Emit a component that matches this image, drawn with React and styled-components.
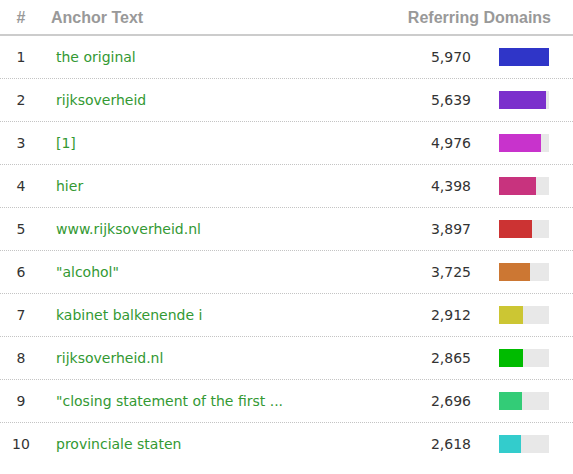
import React from "react";
import styled, { createGlobalStyle } from "styled-components";

const GlobalStyle = createGlobalStyle`
  body {
    margin: 0;
    background: #ffffff;
  }
`;

const rows = [
  { text: "the original", count: 5970, color: "#2f35c8" },
  { text: "rijksoverheid", count: 5639, color: "#7b2fcc" },
  { text: "[1]", count: 4976, color: "#c833cc" },
  { text: "hier", count: 4398, color: "#c8337e" },
  { text: "www.rijksoverheid.nl", count: 3897, color: "#cc3333" },
  { text: "\"alcohol\"", count: 3725, color: "#cc7733" },
  { text: "kabinet balkenende i", count: 2912, color: "#ccc633" },
  { text: "rijksoverheid.nl", count: 2865, color: "#00bb00" },
  { text: "\"closing statement of the first ...", count: 2696, color: "#33cc77" },
  { text: "provinciale staten", count: 2618, color: "#33cccc" },
];

const max = 5970;

export default function App() {
  return (
    <>
      <GlobalStyle />
      <Table>
        <HeadRow>
          <HeadCell $center>#</HeadCell>
          <HeadCell>Anchor Text</HeadCell>
          <HeadCell $right>Referring Domains</HeadCell>
        </HeadRow>
        {rows.map((r, i) => (
          <Row key={i} $last={i === rows.length - 1}>
            <Index>{i + 1}</Index>
            <Anchor>{r.text}</Anchor>
            <Count>{r.count.toLocaleString("en-US")}</Count>
            <BarCell>
              <Bar>
                <Fill $color={r.color} style={{ width: `${(r.count / max) * 100}%` }} />
              </Bar>
            </BarCell>
          </Row>
        ))}
      </Table>
    </>
  );
}

const Table = styled.div`
  width: 573px;
  font-family: "DejaVu Sans", Verdana, sans-serif;
`;

const HeadRow = styled.div`
  display: grid;
  grid-template-columns: 42px 1fr auto;
  align-items: center;
  height: 36px;
  padding-top: 1px;
  box-sizing: border-box;
  border-bottom: 2px solid #cccccc;
`;

const HeadCell = styled.div`
  font-family: "Liberation Sans", Arial, sans-serif;
  font-weight: bold;
  font-size: 16px;
  color: #999999;
  text-align: ${(p) => (p.$center ? "center" : p.$right ? "right" : "left")};
  padding-left: ${(p) => (p.$center || p.$right ? "0" : "9px")};
  padding-right: ${(p) => (p.$right ? "22px" : "0")};
`;

const Row = styled.div`
  display: grid;
  grid-template-columns: 42px 1fr 120px 102px;
  align-items: center;
  height: 42px;
  border-bottom: ${(p) => (p.$last ? "none" : "1px dotted #c4c4c4")};
  font-size: 14px;
`;

const Index = styled.div`
  text-align: center;
  color: #333333;
`;

const Anchor = styled.div`
  padding-left: 14px;
  color: #339933;
  white-space: nowrap;
`;

const Count = styled.div`
  text-align: right;
  color: #333333;
`;

const BarCell = styled.div`
  padding-left: 28px;
`;

const Bar = styled.div`
  width: 50px;
  height: 18px;
  background: #e8e8e8;
`;

const Fill = styled.div`
  height: 100%;
  background: ${(p) => p.$color};
`;
